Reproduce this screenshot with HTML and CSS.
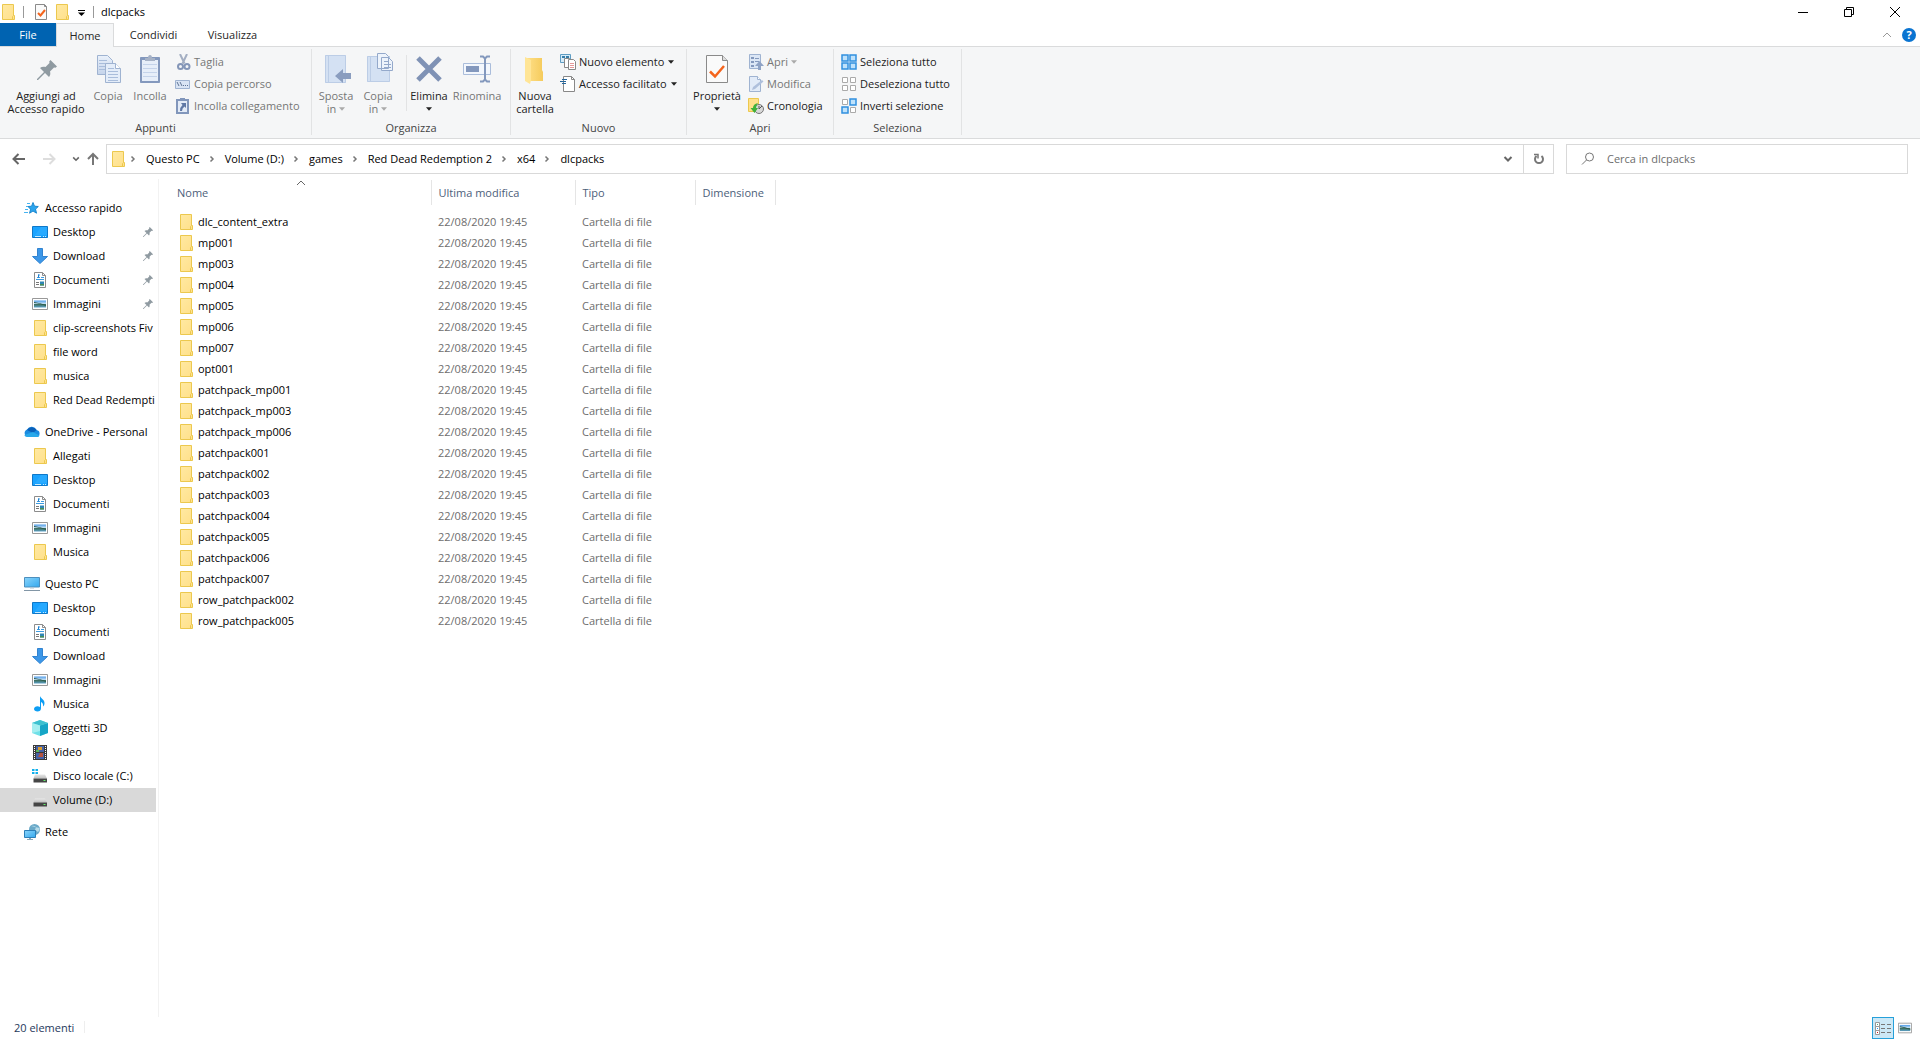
FILE: index.html
```
<!DOCTYPE html>
<html lang="it">
<head>
<meta charset="utf-8">
<title>dlcpacks</title>
<link rel="stylesheet" href="styles.css">
</head>
<body>
<svg class="sprite" aria-hidden="true">
  <defs>
    <linearGradient id="gFolder" x1="0" y1="0" x2="1" y2="1"><stop offset="0" stop-color="#ffe9a2"/><stop offset="1" stop-color="#ffe08a"/></linearGradient>
    <linearGradient id="gBig" x1="0" y1="0" x2="1" y2="0"><stop offset="0" stop-color="#ffe08a"/><stop offset="1" stop-color="#f5cb5c"/></linearGradient>
    <linearGradient id="gScreen" x1="0" y1="0" x2="1" y2="1"><stop offset="0" stop-color="#8ad4fb"/><stop offset="1" stop-color="#34a9ee"/></linearGradient>
    <linearGradient id="gPaper" x1="0" y1="0" x2="0" y2="1"><stop offset="0" stop-color="#eaf1fb"/><stop offset="1" stop-color="#c4d3ea"/></linearGradient>
    <linearGradient id="gPic" x1="0" y1="0" x2="0" y2="1"><stop offset="0" stop-color="#4d9be8"/><stop offset=".5" stop-color="#cfe6f5"/><stop offset=".55" stop-color="#3c6e5e"/><stop offset="1" stop-color="#5ea2c9"/></linearGradient>
    <linearGradient id="gDisk" x1="0" y1="0" x2="0" y2="1"><stop offset="0" stop-color="#e8e8e8"/><stop offset="1" stop-color="#bdbdbd"/></linearGradient>
  </defs>
  <symbol id="folder" viewBox="0 0 16 16"><path d="M1.500.500h11v11h1v4h-12z" fill="url(#gFolder)" stroke="#ecc84e"/><path d="M11.500 15.500v-3l1-1" fill="none" stroke="#ecc84e"/></symbol>
  <symbol id="desktop" viewBox="0 0 16 16"><path d="M.500 2.500h15v11H.500z" fill="#1aa3ff" stroke="#0f78c8"/><path d="M3 12.500h6M11 12.500h1M13 12.500h1" stroke="#c7ebff"/><path d="M9 3h6v8H3z" fill="#3fb4ff" opacity=".4"/></symbol>
  <symbol id="download" viewBox="0 0 16 16"><path d="M5.500.500h5v8h5L8 15.500.500 8.500h5z" fill="#3c97e8" stroke="#3183d0"/></symbol>
  <symbol id="document" viewBox="0 0 16 16"><path d="M2.500.500h8l3 3v12h-11z" fill="#fff" stroke="#8c8c8c"/><path d="M10.500.500v3h3" fill="none" stroke="#8c8c8c"/><path d="M6 3h2M5 5.500h3M9 5.500h3M4 7.500h8" stroke="#3d9be0"/><path d="M6.500 2.500v3" stroke="#1d7fd0"/><path d="M4 10.500h3M4 12.500h3" stroke="#777"/><path d="M8 9.500h4v4H8z" fill="#2f86b5"/><path d="M8 12h4v1.500H8z" fill="#4a8d56"/></symbol>
  <symbol id="picture" viewBox="0 0 16 16"><path d="M.500 2.500h15v11H.500z" fill="#fff" stroke="#999"/><path d="M2 4.500h12v7H2z" fill="url(#gPic)"/><path d="M2 7q5 0 12 3v-1Q8 7 2 6z" fill="#2d5a4a"/></symbol>
  <symbol id="star" viewBox="0 0 16 16"><path d="M9 2.500l1.500 3.700 3.800.300-2.800 2.600 1 4.100L9 11l-3.400 2.200 1-4L4 6.500l3.600-.300z" fill="#2ba5ee" stroke="#1b87cf"/><path d="M3 3.500h3M1 9.500h3M2 6.500h2M0 12.500h4" stroke="#47b4f0"/></symbol>
  <symbol id="cloud" viewBox="0 0 16 16"><path d="M4 13a4 4 0 0 1-1-7.600A5.500 5.500 0 0 1 12.600 6 3.600 3.600 0 0 1 13 13z" fill="#1a8be0"/><path d="M3 6A5.500 5.500 0 0 1 12.600 6L9 9z" fill="#0a5fb8"/><path d="M3 13q-2 0-2.700-2L9 8l6.500 3.500Q15 13 13 13z" fill="#28a8ea"/></symbol>
  <symbol id="pc" viewBox="0 0 16 16"><path d="M.500 1.500h15v9.500H.500z" fill="url(#gScreen)" stroke="#4d8fbd"/><path d="M6 11.500h4v1H6z" fill="#b3c4d0"/><path d="M0 14h16v1H0z" fill="#8296a6"/></symbol>
  <symbol id="music" viewBox="0 0 16 16"><path d="M8 0c1 3 4.500 3.500 4.500 7 0 1.500-.500 2.500-1.500 3.500.500-3-1-4-2-4.500v6.500c0 2-1.500 3-3.500 3S2 14.500 2 13s1.500-2.800 3.500-2.800c.800 0 1.500.200 2.500.800z" fill="#0d9ef4"/></symbol>
  <symbol id="cube" viewBox="0 0 16 16"><path d="M0 3l8-3 8 3v10l-8 3-8-3z" fill="#6fe0e8"/><path d="M8 5.500L16 3v10l-8 3z" fill="#16a5c6"/><path d="M0 3l8 2.500L16 3 8 0z" fill="#3dc0cf"/><path d="M0 3l8 2.500V11l-8 2z" fill="#a4eef0"/></symbol>
  <symbol id="video" viewBox="0 0 16 16"><path d="M1 1h14v15H1z" fill="#3b3b3b"/><path d="M2.500 2v14M13.500 2v14" stroke="#fff" stroke-dasharray="1 1"/><path d="M4 2h8v6H4zM4 9h8v6H4z" fill="#4562a8"/><path d="M6 3h4v3H6z" fill="#d99a2e"/><path d="M8 9h3v4H6z" fill="#b5533f"/><path d="M4 6h3v2H4z" fill="#5ab45a"/></symbol>
  <symbol id="disk" viewBox="0 0 16 16"><path d="M3 6.500h10l2 4H1.500z" fill="url(#gDisk)"/><path d="M1.500 10.500H15v4H1.500z" fill="#454545"/><path d="M11.500 12h2v1h-2z" fill="#63ef6b"/></symbol>
  <symbol id="win" viewBox="0 0 16 16"><path d="M0 1h2.500v2H0zM3.500 1H6v2H3.500zM0 4h2.500v2H0zM3.500 4H6v2H3.500z" fill="#11b0ec"/></symbol>
  <symbol id="network" viewBox="0 0 16 16"><circle cx="10.500" cy="5.500" r="5.500" fill="#6aa9c8"/><path d="M7 2q3-1 5 1l-1 3 3 2q2-2 1.500-4" fill="#b6dbe9"/><path d="M.500 6.500h11v7H.500z" fill="url(#gScreen)" stroke="#2b7fb8"/><path d="M5 14h2v1H5zM3 15h6v1H3z" fill="#8ba9bb"/></symbol>
  <symbol id="pin" viewBox="0 0 20 20"><path d="M13.500 0L20 6.500l-1.500 1.300-1.500-.300-4 4c.700 2 .300 4-1 5.500L8 13l-7 7H0v-1l7-7-4-4c1.500-1.300 3.500-1.700 5.500-1l4-4-.300-1.500z" fill="#8f9aa1"/></symbol>
  <symbol id="check" viewBox="0 0 24 30"><path d="M1.500 1.500h16l5 5v22h-21z" fill="#fafafa" stroke="#8a8a8a"/><path d="M17.500 1.500v5h5" fill="#ddd" stroke="#8a8a8a"/><path d="M5 17.500l5 5L19 12" fill="none" stroke="#f4641c" stroke-width="2.500"/></symbol>
  <symbol id="checksmall" viewBox="0 0 16 16"><path d="M2.500.500h9l2 2v13h-11z" fill="#fafafa" stroke="#8a8a8a"/><path d="M11.500.500v2h2" fill="none" stroke="#8a8a8a"/><path d="M5 9l2.500 2.500L12 6" fill="none" stroke="#f4641c" stroke-width="2"/></symbol>
  <symbol id="copy" viewBox="0 0 26 30"><path d="M1.500 1.500h10l5 5v14h-15z" fill="url(#gPaper)" stroke="#9fb3d1"/><path d="M3 6.500h8M3 9.500h11M3 12.500h8M3 15.500h6" stroke="#a9bddb"/><path d="M9.500 9.500h10l5 5v14h-15z" fill="#e4edf9" stroke="#9fb3d1"/><path d="M19.500 9.500v5h5" fill="#fff" stroke="#9fb3d1"/><path d="M12 14.500h6M12 17.500h10M12 20.500h10M12 23.500h10M12 26.500h10" stroke="#a9bddb"/></symbol>
  <symbol id="paste" viewBox="0 0 20 30"><path d="M.500 3.500h19v25H.500z" fill="#8398bd" stroke="#8398bd"/><path d="M2 6h16v21H2z" fill="#e6eef9"/><path d="M3 10.500h14M3 14.500h14M3 18.500h14M3 22.500h14" stroke="#c4d3ea"/><path d="M5 7V4h3q0-3 2-3t2 3h3v3z" fill="#a6b2c6"/></symbol>
  <symbol id="cut" viewBox="0 0 16 16"><path d="M5 0l4.500 9.500M12 0L7.500 9.500" stroke="#a3aec2" stroke-width="2" fill="none"/><circle cx="5.500" cy="12.500" r="2.500" fill="none" stroke="#8496b8" stroke-width="2"/><circle cx="12" cy="12.500" r="2.500" fill="none" stroke="#8496b8" stroke-width="2"/></symbol>
  <symbol id="path" viewBox="0 0 16 16"><path d="M.500 4.500h14v8H.500z" fill="#d9e4f4" stroke="#9fb3d1"/><path d="M2 6l2 4M5 6l2 4M8 9.500h1M10 9.500h1M12 9.500h1" stroke="#5f7495"/></symbol>
  <symbol id="pastelink" viewBox="0 0 16 16"><path d="M2 2h11v13H2z" fill="#e3ebf7" stroke="#8196bb" stroke-width="2"/><path d="M5 0h5v3H5z" fill="#8196bb"/><path d="M6 5h5v5L9.500 8.500Q7 10 7 13H5q0-4 2.500-6z" fill="#5f78a5"/></symbol>
  <symbol id="moveto" viewBox="0 0 28 30"><path d="M1 1h21v28H1z" fill="#d4e1f3"/><path d="M1.500 1.500h20v27h-20zM4.500 2v26" fill="none" stroke="#bccde6"/><path d="M11 22l8-7v4h8v6h-8v4z" fill="#8a9dbf"/></symbol>
  <symbol id="copyto" viewBox="0 0 28 30"><path d="M1 3h23v26H1z" fill="#d4e1f3"/><path d="M1.500 3.500h22v25h-22zM4.500 4v24" fill="none" stroke="#bccde6"/><path d="M11.500.500h8l3 3v12h-11zM15.500 4.500h7l4 4v9h-11z" fill="#edf3fb" stroke="#94a9cb"/><path d="M18 8.500h4M18 11.500h7M18 14.500h7" stroke="#94a9cb"/></symbol>
  <symbol id="delete" viewBox="0 0 26 30"><path d="M2 4l22 22M24 4L2 26" stroke="#7f92b5" stroke-width="5"/></symbol>
  <symbol id="rename" viewBox="0 0 30 30"><path d="M1.500 9.500h27v11h-27z" fill="#f3f7fd" stroke="#aabddb"/><path d="M4 12h13v6H4z" fill="#8398bd"/><path d="M18 2.500h3l2 2 2-2h3M23 4v22M18 27.500h3l2-2 2 2h3" fill="none" stroke="#8398bd" stroke-width="2"/></symbol>
  <symbol id="newfolder" viewBox="0 0 20 30"><path d="M2 3h16v12l1 2v9H6z" fill="url(#gBig)"/><path d="M1 2l6 3v20l-1 4-5-3z" fill="#ffe596"/></symbol>
  <symbol id="newitem" viewBox="0 0 16 16"><path d="M.500.500h10v8H.500z" fill="#d6ebf8" stroke="#5d9cc3"/><path d="M2 2h3v2H2zM6 2h3v2H6z" fill="#377da8"/><path d="M4.500 4.500h5l1 1v8h-6z" fill="#fff" stroke="#888"/><path d="M8.500 5.500h5l2 2v8h-7z" fill="#fff" stroke="#888"/><path d="M10 9.500h4M10 11.500h4M10 13.500h4" stroke="#e59999"/></symbol>
  <symbol id="easy" viewBox="0 0 16 16"><path d="M3.500.500h8l3 3v12h-11z" fill="#fff" stroke="#888"/><path d="M11.500.500v3h3" fill="none" stroke="#888"/><path d="M2 3.500h5M0 5.500h6M2 7.500h4" stroke="#24669c"/></symbol>
  <symbol id="open" viewBox="0 0 16 16"><path d="M1.500.500h11v14h-11z" fill="#dbe6f5" stroke="#9fb3d1"/><path d="M3 3h3v2H3zM3 7h3v2H3zM3 11h3v2H3z" fill="#8499bd"/><path d="M7 4.500h4M7 7.500h4" stroke="#8499bd"/><path d="M10 16v-4H7l4.500-5L16 12h-3v4z" fill="#8fa3c5"/></symbol>
  <symbol id="edit" viewBox="0 0 16 16"><path d="M1.500.500h8l3 3v12h-11z" fill="#e2ebf8" stroke="#9fb3d1"/><path d="M9.500.500v3h3" fill="#fff" stroke="#9fb3d1"/><path d="M4 14l1-3 9-7 1.500 1.500L7 13z" fill="#afc0dc"/></symbol>
  <symbol id="history" viewBox="0 0 16 16"><path d="M.500.500h10v13H.500z" fill="#ffe08a" stroke="#ecc84e"/><circle cx="11" cy="11" r="4.500" fill="#d8d8d8" stroke="#777"/><path d="M11 8v3l3-3" fill="none" stroke="#555"/><path d="M10 5Q5 6 5 10H2.500l4 5 3.500-5H8q0-3 2-5z" fill="#3fb139"/></symbol>
  <symbol id="selall" viewBox="0 0 16 16"><path d="M1 1h6v6H1zM9 1h6v6H9zM1 9h6v6H1zM9 9h6v6H9z" fill="#bfe2fb" stroke="#3090e0" stroke-width="1.500"/></symbol>
  <symbol id="selnone" viewBox="0 0 16 16"><path d="M1.500 1.500h5v5h-5zM9.500 1.500h5v5h-5zM1.500 9.500h5v5h-5zM9.500 9.500h5v5h-5z" fill="#fff" stroke="#aaa"/></symbol>
  <symbol id="selinv" viewBox="0 0 16 16"><path d="M1.500 1.500h5v5h-5zM9.500 9.500h5v5h-5z" fill="#fff" stroke="#aaa"/><path d="M9 1h6v6H9zM1 9h6v6H1z" fill="#bfe2fb" stroke="#3090e0" stroke-width="1.500"/></symbol>
  <symbol id="drop" viewBox="0 0 5 3"><path d="M0 0h5L2.500 3z" fill="currentColor"/></symbol>
  <symbol id="chev" viewBox="0 0 8 8"><path d="M2.500 1.500L5 4 2.500 6.500" fill="none" stroke="#777" stroke-width="1.500"/></symbol>
  <symbol id="chevdown" viewBox="0 0 10 10"><path d="M1.500 3L5 6.500 8.500 3" fill="none" stroke="currentColor" stroke-width="2"/></symbol>
  <symbol id="chevup" viewBox="0 0 10 6"><path d="M1 5l4-4 4 4" fill="none" stroke="currentColor"/></symbol>
  <symbol id="arrow" viewBox="0 0 14 12"><path d="M13 6H2M6.500 1l-5 5 5 5" fill="none" stroke="currentColor" stroke-width="2"/></symbol>
  <symbol id="arrowright" viewBox="0 0 14 12"><path d="M1 6h11M7.500 1l5 5-5 5" fill="none" stroke="currentColor" stroke-width="2"/></symbol>
</svg>

<div class="window">
  <header class="titlebar">
    <svg class="i16"><use href="#folder"/></svg>
    <span class="bar"></span>
    <button class="qa" aria-label="Proprietà"><svg class="i16"><use href="#checksmall"/></svg></button>
    <button class="qa" aria-label="Nuova cartella"><svg class="i16"><use href="#folder"/></svg></button>
    <button class="qa more" aria-label="Personalizza barra"><svg width="7" height="6" viewBox="0 0 7 6"><path d="M0 2.500h7L3.500 6z" fill="#000"/><path d="M0 .500h7" stroke="#000"/></svg></button>
    <span class="bar"></span>
    <h1>dlcpacks</h1>
    <div class="controls">
      <button aria-label="Riduci a icona"><svg width="10" height="10"><path d="M0 5.500h10" stroke="#000"/></svg></button>
      <button aria-label="Ripristina"><svg width="10" height="10"><path d="M.500 2.500h7v7h-7zM2.500 2V.500h7v7H8" fill="none" stroke="#000"/></svg></button>
      <button aria-label="Chiudi"><svg width="10" height="10"><path d="M0 0l10 10M10 0L0 10" stroke="#000"/></svg></button>
    </div>
  </header>

  <nav class="tabs" aria-label="Barra multifunzione">
    <button class="file">File</button>
    <button class="home">Home</button>
    <button>Condividi</button>
    <button>Visualizza</button>
    <span class="tools">
      <button class="collapse" aria-label="Comprimi"><svg width="10" height="6"><use href="#chevup"/></svg></button>
      <button class="help" aria-label="Guida">?</button>
    </span>
  </nav>

  <div class="ribbon">
    <section class="group appunti">
      <div class="tools-row">
        <button class="big pinbtn"><svg class="big-icon"><use href="#pin" x="7" y="6" width="20" height="20"/></svg><span class="label">Aggiungi ad<br>Accesso rapido</span></button>
        <button class="big w44 off"><svg class="big-icon"><use href="#copy" x="4" y="0" width="26" height="30"/></svg><span class="label">Copia</span></button>
        <button class="big w40 off"><svg class="big-icon"><use href="#paste" x="6" y="0" width="20" height="30"/></svg><span class="label">Incolla</span></button>
        <div class="stack">
          <button class="small off"><svg class="i16"><use href="#cut"/></svg>Taglia</button>
          <button class="small off"><svg class="i16"><use href="#path"/></svg>Copia percorso</button>
          <button class="small off"><svg class="i16"><use href="#pastelink"/></svg>Incolla collegamento</button>
        </div>
      </div>
      <h2>Appunti</h2>
    </section>
    <section class="group organizza">
      <div class="tools-row">
        <button class="big w44 off"><svg class="big-icon"><use href="#moveto" x="4" y="0" width="28" height="30"/></svg><span class="label">Sposta</span><span class="line">in <svg class="drop"><use href="#drop"/></svg></span></button>
        <button class="big w40 off"><svg class="big-icon"><use href="#copyto" x="4" y="-1" width="28" height="30"/></svg><span class="label">Copia</span><span class="line">in <svg class="drop"><use href="#drop"/></svg></span></button>
        <span class="split"></span>
        <button class="big w44"><svg class="big-icon"><use href="#delete" x="3" y="0" width="26" height="30"/></svg><span class="label">Elimina</span><svg class="drop"><use href="#drop"/></svg></button>
        <button class="big w52 off"><svg class="big-icon"><use href="#rename" x="1" y="0" width="30" height="30"/></svg><span class="label">Rinomina</span></button>
      </div>
      <h2>Organizza</h2>
    </section>
    <section class="group nuovo">
      <div class="tools-row">
        <button class="big w44"><svg class="big-icon"><use href="#newfolder" x="5" y="1" width="20" height="30"/></svg><span class="label">Nuova<br>cartella</span></button>
        <div class="stack">
          <button class="small"><svg class="i16"><use href="#newitem"/></svg>Nuovo elemento<svg class="drop"><use href="#drop"/></svg></button>
          <button class="small"><svg class="i16"><use href="#easy"/></svg>Accesso facilitato<svg class="drop"><use href="#drop"/></svg></button>
        </div>
      </div>
      <h2>Nuovo</h2>
    </section>
    <section class="group apri">
      <div class="tools-row">
        <button class="big w52"><svg class="big-icon"><use href="#check" x="4" y="0" width="24" height="30"/></svg><span class="label">Proprietà</span><svg class="drop"><use href="#drop"/></svg></button>
        <div class="stack">
          <button class="small off"><svg class="i16"><use href="#open"/></svg>Apri<svg class="drop"><use href="#drop"/></svg></button>
          <button class="small off"><svg class="i16"><use href="#edit"/></svg>Modifica</button>
          <button class="small"><svg class="i16"><use href="#history"/></svg>Cronologia</button>
        </div>
      </div>
      <h2>Apri</h2>
    </section>
    <section class="group seleziona">
      <div class="tools-row">
        <div class="stack">
          <button class="small"><svg class="i16"><use href="#selall"/></svg>Seleziona tutto</button>
          <button class="small"><svg class="i16"><use href="#selnone"/></svg>Deseleziona tutto</button>
          <button class="small"><svg class="i16"><use href="#selinv"/></svg>Inverti selezione</button>
        </div>
      </div>
      <h2>Seleziona</h2>
    </section>
  </div>

  <div class="address-row">
    <div class="history">
      <button class="back" aria-label="Indietro"><svg width="14" height="12"><use href="#arrow"/></svg></button>
      <button class="forward" aria-label="Avanti"><svg width="14" height="12"><use href="#arrowright"/></svg></button>
      <button class="recent" aria-label="Percorsi recenti"><svg width="8" height="8"><use href="#chevdown"/></svg></button>
      <button class="up" aria-label="Su"><svg width="14" height="14" viewBox="0 0 14 14"><path d="M7 13V2M2 7l5-5 5 5" fill="none" stroke="#777" stroke-width="2"/></svg></button>
    </div>
    <div class="address">
      <svg class="i16"><use href="#folder"/></svg>
      <svg class="sep"><use href="#chev"/></svg><a href="#">Questo PC</a>
      <svg class="sep"><use href="#chev"/></svg><a href="#">Volume (D:)</a>
      <svg class="sep"><use href="#chev"/></svg><a href="#">games</a>
      <svg class="sep"><use href="#chev"/></svg><a href="#">Red Dead Redemption 2</a>
      <svg class="sep"><use href="#chev"/></svg><a href="#">x64</a>
      <svg class="sep"><use href="#chev"/></svg><a href="#">dlcpacks</a>
      <button class="prev" aria-label="Percorsi precedenti"><svg width="10" height="10"><use href="#chevdown"/></svg></button>
      <button class="refresh" aria-label="Aggiorna"><svg width="12" height="12" viewBox="0 0 12 12"><path d="M8.500 3A4 4 0 1 1 3.500 3" fill="none" stroke="#777" stroke-width="2"/><path d="M1 1.500h4v4" fill="none" stroke="#777" stroke-width="1.500"/></svg></button>
    </div>
    <label class="search">
      <svg width="14" height="14" viewBox="0 0 14 14"><circle cx="8.500" cy="5" r="4" fill="none" stroke="#777"/><path d="M5.500 8L1 12.500" stroke="#777"/></svg>
      <input type="text" placeholder="Cerca in dlcpacks" aria-label="Cerca in dlcpacks">
    </label>
  </div>

  <main class="content">
    <nav class="tree" aria-label="Riquadro di spostamento">
      <ul>
        <li class="root"><a href="#"><svg class="i16"><use href="#star"/></svg>Accesso rapido</a></li>
        <li><a href="#"><svg class="i16"><use href="#desktop"/></svg>Desktop<svg class="pin"><use href="#pin"/></svg></a></li>
        <li><a href="#"><svg class="i16"><use href="#download"/></svg>Download<svg class="pin"><use href="#pin"/></svg></a></li>
        <li><a href="#"><svg class="i16"><use href="#document"/></svg>Documenti<svg class="pin"><use href="#pin"/></svg></a></li>
        <li><a href="#"><svg class="i16"><use href="#picture"/></svg>Immagini<svg class="pin"><use href="#pin"/></svg></a></li>
        <li><a href="#"><svg class="i16"><use href="#folder" x="1"/></svg>clip-screenshots Fiv</a></li>
        <li><a href="#"><svg class="i16"><use href="#folder" x="1"/></svg>file word</a></li>
        <li><a href="#"><svg class="i16"><use href="#folder" x="1"/></svg>musica</a></li>
        <li><a href="#"><svg class="i16"><use href="#folder" x="1"/></svg>Red Dead Redempti</a></li>
      </ul>
      <ul>
        <li class="root"><a href="#"><svg class="i16"><use href="#cloud"/></svg>OneDrive - Personal</a></li>
        <li><a href="#"><svg class="i16"><use href="#folder" x="1"/></svg>Allegati</a></li>
        <li><a href="#"><svg class="i16"><use href="#desktop"/></svg>Desktop</a></li>
        <li><a href="#"><svg class="i16"><use href="#document"/></svg>Documenti</a></li>
        <li><a href="#"><svg class="i16"><use href="#picture"/></svg>Immagini</a></li>
        <li><a href="#"><svg class="i16"><use href="#folder" x="1"/></svg>Musica</a></li>
      </ul>
      <ul>
        <li class="root"><a href="#"><svg class="i16"><use href="#pc"/></svg>Questo PC</a></li>
        <li><a href="#"><svg class="i16"><use href="#desktop"/></svg>Desktop</a></li>
        <li><a href="#"><svg class="i16"><use href="#document"/></svg>Documenti</a></li>
        <li><a href="#"><svg class="i16"><use href="#download"/></svg>Download</a></li>
        <li><a href="#"><svg class="i16"><use href="#picture"/></svg>Immagini</a></li>
        <li><a href="#"><svg class="i16"><use href="#music"/></svg>Musica</a></li>
        <li><a href="#"><svg class="i16"><use href="#cube"/></svg>Oggetti 3D</a></li>
        <li><a href="#"><svg class="i16"><use href="#video"/></svg>Video</a></li>
        <li><a href="#"><svg class="i16"><use href="#disk"/><use href="#win"/></svg>Disco locale (C:)</a></li>
        <li class="current"><a href="#"><svg class="i16"><use href="#disk"/></svg>Volume (D:)</a></li>
      </ul>
      <ul>
        <li class="root"><a href="#"><svg class="i16"><use href="#network"/></svg>Rete</a></li>
      </ul>
    </nav>

    <div class="files">
      <table>
        <colgroup><col class="c-name"><col class="c-date"><col class="c-type"><col class="c-size"></colgroup>
        <thead><tr><th scope="col">Nome<svg class="sort"><use href="#chevup"/></svg></th><th scope="col">Ultima modifica</th><th scope="col">Tipo</th><th scope="col">Dimensione</th></tr></thead>
        <tbody>
          <tr><td><svg class="i16"><use href="#folder"/></svg>dlc_content_extra</td><td>22/08/2020 19:45</td><td>Cartella di file</td><td></td></tr>
          <tr><td><svg class="i16"><use href="#folder"/></svg>mp001</td><td>22/08/2020 19:45</td><td>Cartella di file</td><td></td></tr>
          <tr><td><svg class="i16"><use href="#folder"/></svg>mp003</td><td>22/08/2020 19:45</td><td>Cartella di file</td><td></td></tr>
          <tr><td><svg class="i16"><use href="#folder"/></svg>mp004</td><td>22/08/2020 19:45</td><td>Cartella di file</td><td></td></tr>
          <tr><td><svg class="i16"><use href="#folder"/></svg>mp005</td><td>22/08/2020 19:45</td><td>Cartella di file</td><td></td></tr>
          <tr><td><svg class="i16"><use href="#folder"/></svg>mp006</td><td>22/08/2020 19:45</td><td>Cartella di file</td><td></td></tr>
          <tr><td><svg class="i16"><use href="#folder"/></svg>mp007</td><td>22/08/2020 19:45</td><td>Cartella di file</td><td></td></tr>
          <tr><td><svg class="i16"><use href="#folder"/></svg>opt001</td><td>22/08/2020 19:45</td><td>Cartella di file</td><td></td></tr>
          <tr><td><svg class="i16"><use href="#folder"/></svg>patchpack_mp001</td><td>22/08/2020 19:45</td><td>Cartella di file</td><td></td></tr>
          <tr><td><svg class="i16"><use href="#folder"/></svg>patchpack_mp003</td><td>22/08/2020 19:45</td><td>Cartella di file</td><td></td></tr>
          <tr><td><svg class="i16"><use href="#folder"/></svg>patchpack_mp006</td><td>22/08/2020 19:45</td><td>Cartella di file</td><td></td></tr>
          <tr><td><svg class="i16"><use href="#folder"/></svg>patchpack001</td><td>22/08/2020 19:45</td><td>Cartella di file</td><td></td></tr>
          <tr><td><svg class="i16"><use href="#folder"/></svg>patchpack002</td><td>22/08/2020 19:45</td><td>Cartella di file</td><td></td></tr>
          <tr><td><svg class="i16"><use href="#folder"/></svg>patchpack003</td><td>22/08/2020 19:45</td><td>Cartella di file</td><td></td></tr>
          <tr><td><svg class="i16"><use href="#folder"/></svg>patchpack004</td><td>22/08/2020 19:45</td><td>Cartella di file</td><td></td></tr>
          <tr><td><svg class="i16"><use href="#folder"/></svg>patchpack005</td><td>22/08/2020 19:45</td><td>Cartella di file</td><td></td></tr>
          <tr><td><svg class="i16"><use href="#folder"/></svg>patchpack006</td><td>22/08/2020 19:45</td><td>Cartella di file</td><td></td></tr>
          <tr><td><svg class="i16"><use href="#folder"/></svg>patchpack007</td><td>22/08/2020 19:45</td><td>Cartella di file</td><td></td></tr>
          <tr><td><svg class="i16"><use href="#folder"/></svg>row_patchpack002</td><td>22/08/2020 19:45</td><td>Cartella di file</td><td></td></tr>
          <tr><td><svg class="i16"><use href="#folder"/></svg>row_patchpack005</td><td>22/08/2020 19:45</td><td>Cartella di file</td><td></td></tr>
        </tbody>
      </table>
    </div>
  </main>

  <footer class="status">
    <span class="count">20 elementi</span>
    <div class="views">
      <button class="active" aria-label="Dettagli"><svg width="16" height="13"><path d="M.500.500h4v4h-4zM.500 4.500h4v4h-4zM.500 8.500h4v4h-4z" fill="#fff" stroke="#999"/><path d="M6 2.500h4M12 2.500h4M6 6.500h4M12 6.500h4M6 10.500h4M12 10.500h4" stroke="#777"/><path d="M2 2h1v1H2z" fill="#4a8"/><path d="M2 6h1v1H2z" fill="#29f"/><path d="M2 10h1v1H2z" fill="#c11"/></svg></button>
      <button aria-label="Icone grandi"><svg width="14" height="16"><use href="#picture" width="14" height="16"/></svg></button>
    </div>
  </footer>
</div>
</body>
</html>
```
FILE: styles.css
```
* { box-sizing: border-box; }
body {
  margin: 0;
  background: #fff;
  color: #000;
  font: 11px/16px "Open Sans", "Noto Sans", sans-serif;
}
button { padding: 0; border: 0; background: none; font: inherit; color: inherit; }
a { color: inherit; text-decoration: none; }
h1, h2 { margin: 0; font-size: 11px; font-weight: 400; }
ul { margin: 0; padding: 0; list-style: none; }
svg { flex: none; display: block; overflow: visible; }
.sprite { position: absolute; width: 0; height: 0; }
.i16 { width: 16px; height: 16px; }
.window { display: flex; flex-direction: column; min-height: 100vh; }

/* title bar */
.titlebar { display: flex; align-items: center; height: 23px; padding-left: 1px; }
.titlebar .bar { width: 1px; height: 12px; margin: 0 9px 0 6px; background: #999; }
.titlebar .more + .bar { margin: 0 7px 0 4px; }
.qa { width: 22px; }
.qa.more { width: 12px; }
.qa.more svg { margin: 2px 0 0 1px; }
.titlebar h1 { flex: 1; }
.controls { display: flex; padding-right: 2px; }
.controls button { display: grid; place-items: center; width: 46px; height: 20px; }

/* tabs */
.tabs { display: flex; height: 24px; border-bottom: 1px solid #dadbdc; color: #262626; }
.tabs > button { width: 79px; height: 23px; }
.tabs .file { width: 56px; background: #0063b1; color: #fff; }
.tabs .home { width: 58px; height: 24px; border: 1px solid #dadbdc; border-bottom: 0; background: #f5f6f7; }
.tabs .tools { display: flex; align-items: center; gap: 10px; margin-left: auto; padding-right: 4px; color: #999; }
.help { width: 14px; height: 14px; border-radius: 50%; background: #0a74d1; color: #fff; font-weight: 700; line-height: 14px; }

/* ribbon */
.ribbon { display: flex; height: 92px; padding: 2px 0; background: #f5f6f7; border-bottom: 1px solid #dadbdc; color: #222; }
.group { display: flex; flex-direction: column; justify-content: space-between; border-right: 1px solid #e2e3e4; height: 86px; }
.group h2 { text-align: center; color: #444; line-height: 14px; }
.appunti { width: 312px; }
.organizza { width: 199px; }
.nuovo { width: 176px; }
.apri { width: 147px; }
.seleziona { width: 128px; }
.tools-row { display: flex; padding-top: 2px; }
.big { display: flex; flex: none; flex-direction: column; align-items: center; height: 66px; line-height: 13px; white-space: nowrap; }
.big-icon { width: 32px; height: 32px; margin: 3px 0 3px; }
.big > .drop { margin-top: 5px; }
.line { display: flex; align-items: center; gap: 3px; }
.pinbtn { width: 86px; padding-left: 6px; }
.w40 { width: 40px; }
.w44 { width: 44px; }
.w52 { width: 52px; }
.off { color: #767676; }
.off .drop { color: #aaa; }
.drop { width: 6px; height: 4px; }
.split { width: 1px; height: 56px; margin: 4px 0 0 8px; background: #e2e3e4; }
.stack { display: flex; flex-direction: column; padding-left: 5px; }
.small { display: flex; align-items: center; gap: 3px; height: 22px; white-space: nowrap; }
.organizza .tools-row, .nuovo .tools-row { padding-left: 2px; }
.nuovo .stack { padding-left: 3px; }
.nuovo .drop { margin-left: 1px; }
.apri .tools-row { padding-left: 4px; }
.seleziona .tools-row { padding-left: 2px; }

/* address bar */
.address-row { display: flex; align-items: center; padding: 5px 12px; }
.history { display: flex; align-items: center; width: 94px; color: #666; }
.history .back { width: 30px; }
.history .forward { width: 30px; color: #ddd; }
.history .recent { width: 14px; padding-left: 0; }
.history .up { width: 14px; }
.address { flex: 1; display: flex; align-items: center; height: 30px; padding-left: 4px; border: 1px solid #d9d9d9; }
.sep { width: 8px; height: 8px; margin: 0 9px 0 8px; }
.address .i16 + .sep { margin-left: 2px; }
.prev { display: grid; place-items: center; width: 30px; margin-left: auto; color: #666; }
.refresh { display: grid; place-items: center; width: 30px; height: 28px; border-left: 1px solid #d9d9d9; }
.search { display: flex; align-items: center; gap: 12px; width: 342px; height: 30px; margin-left: 12px; padding-left: 14px; border: 1px solid #d9d9d9; }
.search input { flex: 1; min-width: 0; padding: 0; border: 0; outline: 0; background: none; font: inherit; }
.search input::placeholder { color: #6d6d6d; opacity: 1; }

/* navigation pane */
.content { flex: 1; display: flex; }
.tree { width: 159px; padding: 17px 2px 0 0; border-right: 1px solid #f2f2f2; }
.tree ul { margin-bottom: 8px; }
.tree a { display: flex; align-items: center; gap: 5px; height: 24px; padding-left: 32px; overflow: hidden; white-space: nowrap; }
.tree .root a { padding-left: 24px; }
.tree .current { background: #d9d9d9; }
.pin { width: 10px; height: 10px; margin: 0 3px 0 auto; }

/* file list */
.files { flex: 1; padding-top: 1px; }
table { table-layout: fixed; width: 616px; border-collapse: collapse; }
.c-name { width: 272px; }
.c-date { width: 144px; }
.c-type { width: 120px; }
.c-size { width: 80px; }
th { position: relative; height: 25px; padding: 0 0 0 7px; border-right: 1px solid #e5e5e5; color: #4c607a; font-weight: 400; text-align: left; }
th:first-child { padding-left: 18px; }
.sort { position: absolute; top: 0; left: 137px; width: 10px; height: 6px; color: #666; }
tbody::before { content: ""; display: block; height: 6px; }
td { height: 21px; padding: 0 0 0 7px; color: #6d6d6d; white-space: nowrap; }
td:first-child { display: flex; align-items: center; gap: 3px; padding-left: 20px; color: #000; }

/* status bar */
.status { display: flex; justify-content: space-between; height: 23px; color: #1e395b; }
.count { margin: 4px 0 7px 14px; padding-right: 10px; line-height: 14px; border-right: 1px solid #eee; }
.views { display: flex; gap: 4px; padding-right: 8px; }
.views button { display: grid; place-items: center; width: 14px; height: 22px; }
.views .active { width: 22px; border: 1px solid #26a0da; background: #cce8f6; }
```
